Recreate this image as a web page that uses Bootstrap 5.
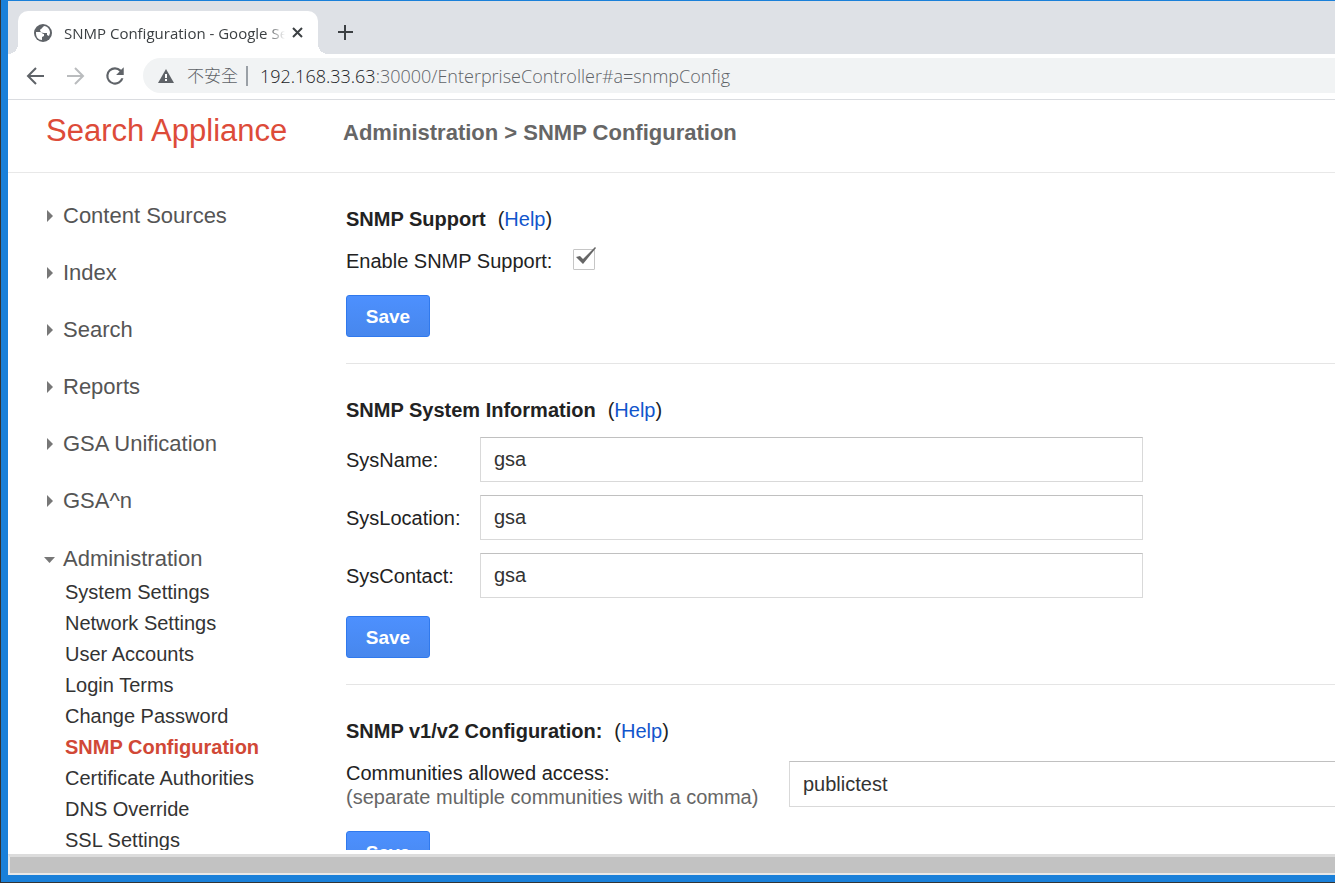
<!DOCTYPE html>
<html lang="zh-Hant">
<head>
<meta charset="utf-8">
<meta name="viewport" content="width=device-width, initial-scale=1">
<title>SNMP Configuration - Google Search Appliance</title>
<link href="https://cdn.jsdelivr.net/npm/bootstrap@5.3.0/dist/css/bootstrap.min.css" rel="stylesheet">
<style>
  body { font-family: "Liberation Sans", Arial, sans-serif; font-size: 20px; line-height: 24px; color: #222; background: #1a80d9; border-left: 1px solid #333; border-bottom: 1px solid #333; }
  a { text-decoration: none; }
  .browser { padding: 1px 0 7px 7px; }
  .chrome-ui { font-family: "Open Sans", "Noto Sans CJK TC", sans-serif; }
  .tabstrip { background: #dee1e6; padding: 10px 10px 0; height: 53px; }
  .tab { position: relative; width: 300px; background: #fff; border-radius: 10px 10px 0 0; padding: 0 12px 0 16px; color: #3c4043; }
  .tab::before, .tab::after { content: ""; position: absolute; bottom: 0; width: 10px; height: 10px; }
  .tab::before { left: -10px; background: radial-gradient(circle at 0 0, transparent 10px, #fff 10px); }
  .tab::after { right: -10px; background: radial-gradient(circle at 100% 0, transparent 10px, #fff 10px); }
  .tab-title { font-size: 15px; -webkit-mask-image: linear-gradient(90deg, #000 92%, transparent); mask-image: linear-gradient(90deg, #000 92%, transparent); }
  .icon-btn { border: 0; background: none; padding: 0; display: flex; }
  .toolbar { height: 46px; padding: 0 0 2px 15px; border-bottom: 1px solid #dadce0; background: #fff; }
  .omnibox { height: 35px; background: #f1f3f4; border-radius: 18px 0 0 18px; padding-left: 14px; font-size: 18px; color: #5f6368; }
  .omnibox .insecure { font-size: 17px; font-weight: 300; }
  .omnibox .address { font-weight: 300; }
  .omnibox .host { color: #202124; }
  .omnibox .sep { width: 2px; height: 20px; background: #9aa0a6; }
  .page-head { height: 73px; border-bottom: 1px solid #e8e8e8; padding: 0 0 6px 38px; }
  .brand-name { width: 297px; font-size: 31px; line-height: 36px; padding-bottom: 4px; color: #dd4b39; }
  .crumbs { font-size: 22px; font-weight: 700; color: #666; }
  .viewport { margin-bottom: 4px; }
  .side { width: 338px; padding: 14px 0 0 35px; }
  .nav-head { height: 57px; font-size: 22px; color: #555; }
  .nav-head svg { width: 13px; margin-right: 7px; }
  .nav-head.open { height: 60px; }
  .sub { margin: 0 0 0 22px; margin-top: -12px; line-height: 31px; }
  .sub a { color: #333; }
  .sub a.current { color: #d14836; font-weight: 700; }
  .panel { padding: 34px 0 26px; border-bottom: 1px solid #e5e5e5; }
  .panel-head { margin-bottom: 18px; }
  .panel-head.tight { margin-bottom: 15px; }
  .panel h2 { font-size: 20px; line-height: 24px; font-weight: 700; margin: 0; }
  .panel a { color: #15c; }
  .save { display: block; width: 84px; height: 42px; margin-top: 22px; border: 1px solid #3079ed; border-radius: 3px; color: #fff; font-weight: 700; font-size: 19px; line-height: 24px; padding: 2px 0 0; background: linear-gradient(#4d90fe, #4787ed); }
  .fields { gap: 13px; }
  .fields + .save { margin-top: 18px; }
  .field-label { width: 134px; }
  .wide-label { width: 443px; }
  .field { height: 45px; max-width: 663px; font-size: 20px; color: #333; padding: 0 13px; border: 1px solid #d9d9d9; border-top-color: #c0c0c0; border-radius: 0; }
  .field.wide { max-width: none; height: 46px; border-right: 0; }
  .hint { color: #666; }
  .tick-box { height: 22px; margin-left: 21px; }
  .tick { appearance: none; width: 22px; height: 21px; border: 1px solid #c6c6c6; border-radius: 1px; margin: 0; display: block; }
  .tick-mark { position: absolute; left: 2px; top: -2px; pointer-events: none; visibility: hidden; }
  .tick:checked + .tick-mark { visibility: visible; }
  .hbar { height: 21px; background: #c2c2c2; border-top: 3px solid #dcdcdc; border-bottom: 2px solid #e8e8e8; border-left: 2px solid #e8e8e8; }
</style>
</head>
<body class="vh-100 overflow-hidden">
<div class="browser d-flex flex-column h-100">
  <header class="chrome-ui flex-shrink-0">
    <div class="tabstrip d-flex">
      <div class="tab d-flex align-items-center">
        <svg class="flex-shrink-0" width="18" height="18" viewBox="0 0 18 18" aria-hidden="true"><circle cx="9" cy="9" r="9" fill="#5f6368"/><path fill="#fff" d="M2 8h4c2 0 2 2 4 2v2l-2 1v3C4 16 2 13 2 9zM10 2c4 0 6 4 6 7l-1 3-2-1V9h-3C8 9 6 8 6 6c0-1 2-1 2-2z"/></svg>
        <div class="tab-title flex-fill overflow-hidden text-nowrap ms-2 ps-1 me-1">SNMP Configuration - Google Search</div>
        <button class="icon-btn" type="button" aria-label="Close tab"><svg width="17" height="16" viewBox="0 0 17 16"><path d="M4 3l9 9M13 3l-9 9" stroke="#3c4043" stroke-width="2"/></svg></button>
      </div>
      <button class="icon-btn align-items-center ms-3" type="button" aria-label="New tab"><svg width="22" height="22" viewBox="0 0 22 22"><path d="M11 3v15M4 10h15" stroke="#3c4043" stroke-width="2"/></svg></button>
    </div>
    <div class="toolbar d-flex align-items-center">
      <button class="icon-btn me-3" type="button" aria-label="Back"><svg width="24" height="24" viewBox="0 0 24 24" fill="none" stroke="#5f6368" stroke-width="2"><path d="M21 12H6M13 4l-8 8 8 8"/></svg></button>
      <button class="icon-btn me-3" type="button" aria-label="Forward"><svg width="24" height="24" viewBox="0 0 24 24" fill="none" stroke="#babcbe" stroke-width="2"><path d="M4 12h15M12 4l8 8-8 8"/></svg></button>
      <button class="icon-btn me-3" type="button" aria-label="Reload"><svg width="24" height="24" viewBox="1 1 22 22" fill="#5f6368"><path d="M17.65 6.35A7.96 7.96 0 0 0 12 4a8 8 0 1 0 7.73 10h-2.08A6 6 0 1 1 12 6c1.66 0 3.14.69 4.220 1.780L13 11h7V4z"/></svg></button>
      <div class="omnibox flex-fill d-flex align-items-center">
        <svg class="me-2" width="18" height="18" viewBox="0 0 18 18" aria-hidden="true"><path fill="#5f6368" d="M1 16L9 2l8 14z"/><path stroke="#fff" stroke-width="2" d="M9 7v4M9 12v2"/></svg>
        <span class="insecure ms-1">不安全</span><span class="sep mx-2"></span>
        <span class="address ms-1"><span class="host">192.168.33.63</span>:30000/EnterpriseController#a=snmpConfig</span>
      </div>
    </div>
  </header>
  <div class="bg-white flex-fill overflow-hidden d-flex flex-column">
    <div class="page-head d-flex align-items-center flex-shrink-0">
      <div class="brand-name">Search Appliance</div>
      <div class="crumbs">Administration &gt; SNMP Configuration</div>
    </div>
    <div class="viewport d-flex flex-fill overflow-hidden">
      <nav class="side flex-shrink-0">
        <a href="#" class="nav-head d-flex align-items-center"><svg height="12" viewBox="0 0 13 12"><path fill="#777" d="M4 0l6 6-6 6z"/></svg>Content Sources</a>
        <a href="#" class="nav-head d-flex align-items-center"><svg height="12" viewBox="0 0 13 12"><path fill="#777" d="M4 0l6 6-6 6z"/></svg>Index</a>
        <a href="#" class="nav-head d-flex align-items-center"><svg height="12" viewBox="0 0 13 12"><path fill="#777" d="M4 0l6 6-6 6z"/></svg>Search</a>
        <a href="#" class="nav-head d-flex align-items-center"><svg height="12" viewBox="0 0 13 12"><path fill="#777" d="M4 0l6 6-6 6z"/></svg>Reports</a>
        <a href="#" class="nav-head d-flex align-items-center"><svg height="12" viewBox="0 0 13 12"><path fill="#777" d="M4 0l6 6-6 6z"/></svg>GSA Unification</a>
        <a href="#" class="nav-head d-flex align-items-center"><svg height="12" viewBox="0 0 13 12"><path fill="#777" d="M4 0l6 6-6 6z"/></svg>GSA^n</a>
        <a href="#" class="nav-head open d-flex align-items-center"><svg height="12" viewBox="0 0 13 12"><path fill="#777" d="M1 4h11l-5.500 6z"/></svg>Administration</a>
        <ul class="sub list-unstyled">
          <li><a href="#">System Settings</a></li>
          <li><a href="#">Network Settings</a></li>
          <li><a href="#">User Accounts</a></li>
          <li><a href="#">Login Terms</a></li>
          <li><a href="#">Change Password</a></li>
          <li><a href="#" class="current">SNMP Configuration</a></li>
          <li><a href="#">Certificate Authorities</a></li>
          <li><a href="#">DNS Override</a></li>
          <li><a href="#">SSL Settings</a></li>
        </ul>
      </nav>
      <main class="flex-fill">
        <form class="panel">
          <div class="panel-head d-flex"><h2>SNMP Support</h2><span class="ms-2 ps-1">(<a href="#">Help</a>)</span></div>
          <div class="d-flex align-items-start">
            <label for="enable">Enable SNMP Support:</label>
            <div class="tick-box position-relative"><input class="tick" type="checkbox" id="enable" checked><svg class="tick-mark" width="22" height="18" viewBox="0 0 22 18"><path fill="#666" d="M1 10l4-1 3 3L20 0l1 1L8 17z"/></svg></div>
          </div>
          <button class="save" type="button">Save</button>
        </form>
        <form class="panel">
          <div class="panel-head tight d-flex"><h2>SNMP System Information</h2><span class="ms-2 ps-1">(<a href="#">Help</a>)</span></div>
          <div class="d-flex flex-column fields">
            <div class="d-flex align-items-center"><label class="field-label flex-shrink-0" for="sysname">SysName:</label><input class="field w-100" id="sysname" type="text" value="gsa"></div>
            <div class="d-flex align-items-center"><label class="field-label flex-shrink-0" for="sysloc">SysLocation:</label><input class="field w-100" id="sysloc" type="text" value="gsa"></div>
            <div class="d-flex align-items-center"><label class="field-label flex-shrink-0" for="syscon">SysContact:</label><input class="field w-100" id="syscon" type="text" value="gsa"></div>
          </div>
          <button class="save" type="button">Save</button>
        </form>
        <form class="panel">
          <div class="panel-head d-flex"><h2>SNMP v1/v2 Configuration:</h2><span class="ms-2 ps-1">(<a href="#">Help</a>)</span></div>
          <div class="d-flex">
            <label class="wide-label flex-shrink-0" for="comm">Communities allowed access:<br><span class="hint">(separate multiple communities with a comma)</span></label>
            <input class="field wide flex-fill" id="comm" type="text" value="publictest">
          </div>
          <button class="save" type="button">Save</button>
        </form>
      </main>
    </div>
    <div class="hbar flex-shrink-0"></div>
  </div>
</div>
<script src="https://cdn.jsdelivr.net/npm/bootstrap@5.3.0/dist/js/bootstrap.bundle.min.js"></script>
</body>
</html>
